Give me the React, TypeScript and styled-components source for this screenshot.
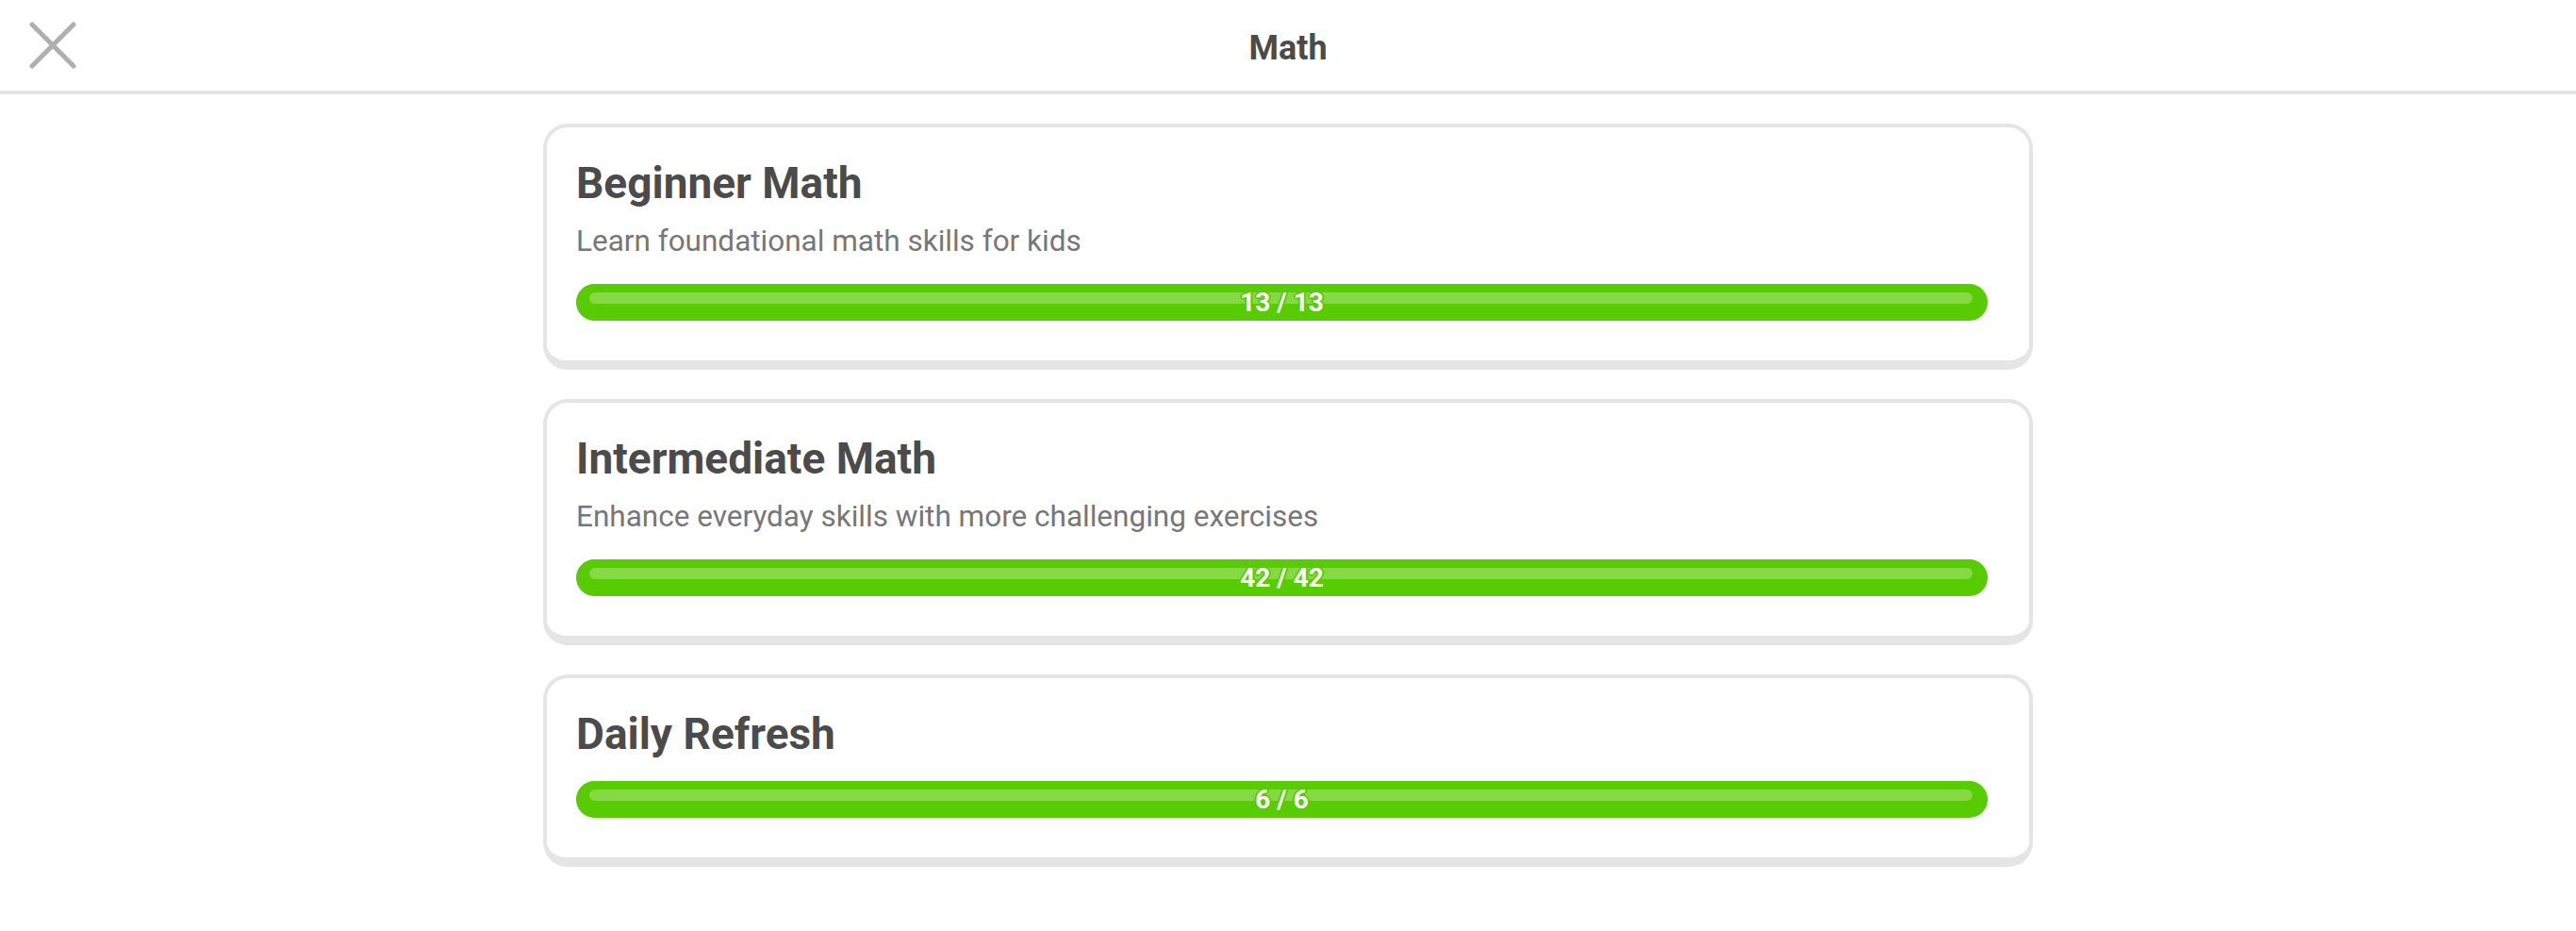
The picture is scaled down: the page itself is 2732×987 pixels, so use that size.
import React from 'react'
import styled, { createGlobalStyle } from 'styled-components'

interface ICourse {
  title: string
  subtitle?: string
  done: number
  total: number
}

const courses: ICourse[] = [
  { title: 'Beginner Math', subtitle: 'Learn foundational math skills for kids', done: 13, total: 13 },
  { title: 'Intermediate Math', subtitle: 'Enhance everyday skills with more challenging exercises', done: 42, total: 42 },
  { title: 'Daily Refresh', done: 6, total: 6 },
]

export default function App() {
  return (
    <Page>
      <GlobalStyle />
      <Header>
        <CloseButton aria-label="Close">
          <svg width="50" height="50" viewBox="0 0 50 50">
            <path d="M3 3 L47 47 M47 3 L3 47" stroke="#afafaf" strokeWidth="5" strokeLinecap="round" />
          </svg>
        </CloseButton>
        <HeaderTitle>Math</HeaderTitle>
        <span />
      </Header>
      <List>
        { courses.map((c, i) =>
        <Card key={i}>
          <Title>{c.title}</Title>
          { c.subtitle && <Subtitle>{c.subtitle}</Subtitle> }
          <Bar>
            <Fill style={{ width: `${(c.done / c.total) * 100}%` }}>
              <Shine />
            </Fill>
            <BarLabel>{c.done} / {c.total}</BarLabel>
          </Bar>
        </Card>
        )}
      </List>
    </Page>
  )
}

const GlobalStyle = createGlobalStyle`
  html, body {
    margin: 0;
    padding: 0;
    background: #fff;
  }
  body {
    font-family: Roboto, "Noto Sans", "Liberation Sans", sans-serif;
  }
`
const Page = styled.div`
  width: 100%;
  min-height: 987px;
  background: #fff;
`
const Header = styled.header`
  display: grid;
  grid-template-columns: 1fr auto 1fr;
  align-items: center;
  height: 96px;
  padding: 0 31px;
  border-bottom: 4px solid #e5e5e5;
`
const CloseButton = styled.button`
  display: flex;
  align-items: center;
  justify-self: start;
  width: 50px;
  height: 50px;
  padding: 0;
  border: none;
  background: none;
  cursor: pointer;
  svg {
    display: block;
  }
`
const HeaderTitle = styled.h1`
  margin: 5px 0 0;
  font-size: 36px;
  font-weight: 700;
  color: #4b4b4b;
  line-height: 1;
`
const List = styled.ul`
  display: flex;
  flex-direction: column;
  align-items: center;
  gap: 31px;
  list-style: none;
  margin: 0;
  padding: 31px 0;
`
const Card = styled.li`
  display: flex;
  flex-direction: column;
  box-sizing: border-box;
  width: 1580px;
  padding: 31px 44px 42px 31px;
  border: 4px solid #e5e5e5;
  border-bottom-width: 10px;
  border-radius: 26px;
  background: #fff;
`
const Title = styled.h2`
  margin: 0;
  font-size: 46px;
  font-weight: 700;
  line-height: 56px;
  color: #4b4b4b;
`
const Subtitle = styled.p`
  margin: 11px 0 0;
  font-size: 31.5px;
  font-weight: 400;
  line-height: 46px;
  color: #777;
`
const Bar = styled.div`
  position: relative;
  display: flex;
  margin-top: 22px;
  height: 39px;
  border-radius: 20px;
  background: #e5e5e5;
`
const Fill = styled.div`
  position: relative;
  height: 100%;
  border-radius: 20px;
  background: #58cc02;
`
const Shine = styled.div`
  position: absolute;
  left: 14px;
  right: 16px;
  top: 9px;
  height: 12px;
  border-radius: 6px;
  background: #84d945;
`
const BarLabel = styled.span`
  position: absolute;
  inset: 0;
  display: flex;
  align-items: center;
  justify-content: center;
  font-size: 28px;
  font-weight: 700;
  color: #fff;
  line-height: 1;
  text-shadow: 2px 0 0 #58cc02, -2px 0 0 #58cc02, 0 2px 0 #58cc02, 0 -2px 0 #58cc02,
    1px 1px 0 #58cc02, -1px -1px 0 #58cc02, 1px -1px 0 #58cc02, -1px 1px 0 #58cc02;
`
